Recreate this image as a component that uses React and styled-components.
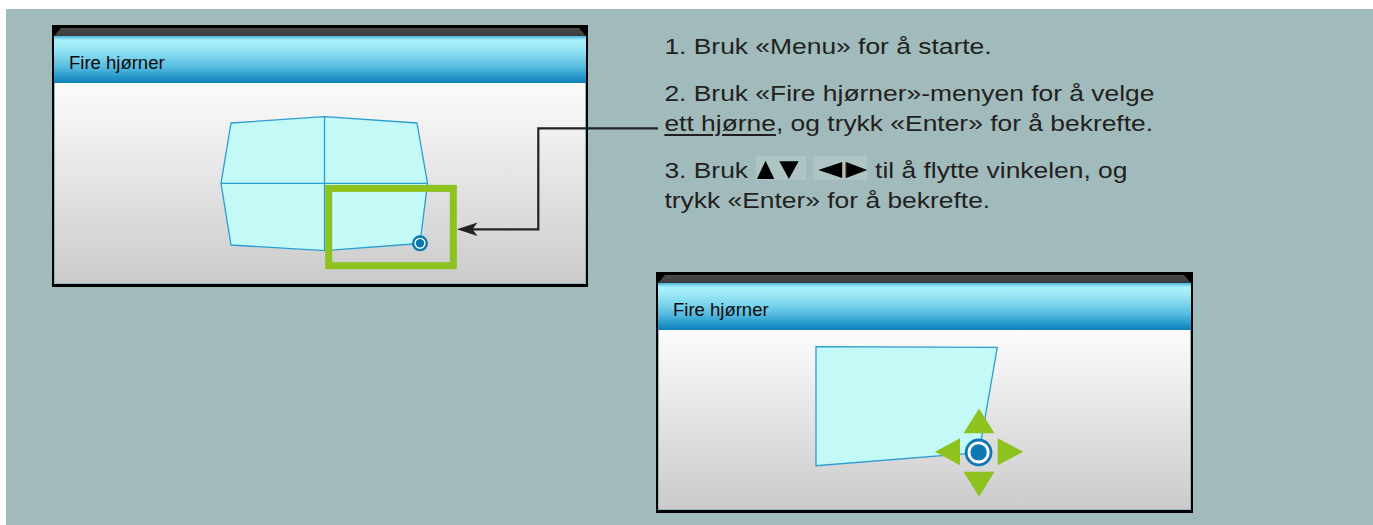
import React from 'react';
import styled, { createGlobalStyle } from 'styled-components';

const GlobalStyle = createGlobalStyle`
  html, body { margin: 0; padding: 0; background: #ffffff; }
  body { font-family: "Liberation Sans", Arial, sans-serif; }
`;

const Page = styled.div`
  width: 1373px;
  height: 525px;
  padding: 9px 0 0 6px;
  box-sizing: border-box;
  background: #ffffff;
  overflow: hidden;
`;

const Canvas = styled.div`
  position: relative;
  height: 516px;
  background: #a1bbbc;
  display: flex;
  align-items: flex-start;
  padding: 16px 0 0 46px;
  box-sizing: border-box;
`;

const RightColumn = styled.div`
  margin-left: 68px;
  display: flex;
  flex-direction: column;
  align-items: flex-start;
`;

const Steps = styled.div`
  margin-top: 7px;
  padding-left: 7px;
  width: 430px;
  transform: scaleX(1.2);
  transform-origin: 0 0;
  color: #231f20;
  font-size: 22px;
  line-height: 30px;
  white-space: nowrap;
  display: flex;
  flex-direction: column;
  gap: 17px;
`;

const Step = styled.p`
  margin: 0;
`;

const Underlined = styled.span`
  text-decoration: underline;
  text-decoration-thickness: 1.5px;
  text-underline-offset: 3px;
`;

const KeyGroup = styled.span`
  display: inline-block;
  width: ${(p) => p.$w}px;
  height: 24px;
  background: #afc4c4;
  vertical-align: -2px;
`;

const KeySvg = styled.svg`
  display: block;
  width: 100%;
  height: 100%;
`;

const PanelFrame = styled.div`
  width: ${(p) => p.$w}px;
  height: ${(p) => p.$h}px;
  margin-top: ${(p) => p.$top || 0}px;
  background: #000000;
  padding: 3px 2px;
  box-sizing: border-box;
  display: flex;
  flex-direction: column;
  flex: none;
`;

const TitleBevel = styled.div`
  height: 8px;
  flex: none;
  background: linear-gradient(#4a4a4a, #3c3c3c);
  clip-path: polygon(7px 0, calc(100% - 7px) 0, 100% 100%, 0 100%);
`;

const TitleBar = styled.div`
  height: 47px;
  flex: none;
  box-sizing: border-box;
  padding: 16px 0 0 15px;
  background: linear-gradient(
    180deg,
    #45b4da 0px,
    #a9f1fa 4px,
    #a3ecf8 9px,
    #80d7ee 20px,
    #52b9df 32px,
    #2396c8 41px,
    #0f80b9 47px
  );
  color: #0a0a0a;
  font-size: 18.5px;
  line-height: 21px;
`;

const PanelBody = styled.div`
  flex: 1;
  min-height: 0;
  border: 1px solid #8ab6c8;
  border-top: none;
  background: linear-gradient(180deg, #fcfcfc, #cbcbcb);
`;

const Drawing = styled.svg`
  display: block;
  width: 100%;
  height: 100%;
`;

const Overlay = styled.svg`
  position: absolute;
  left: 0;
  top: 0;
  width: 100%;
  height: 100%;
  pointer-events: none;
`;

const CYAN = '#c3faf8';
const EDGE = '#2b9dcf';
const GREEN = '#8dc21f';
const DOT = '#0b78b2';

function Panel({ w, h, top, viewBox, children }) {
  return (
    <PanelFrame $w={w} $h={h} $top={top}>
      <TitleBevel />
      <TitleBar>Fire hjørner</TitleBar>
      <PanelBody>
        <Drawing viewBox={viewBox} preserveAspectRatio="none">
          {children}
        </Drawing>
      </PanelBody>
    </PanelFrame>
  );
}

function Target({ cx, cy, r, ring, inner }) {
  return (
    <g>
      <circle cx={cx} cy={cy} r={r} fill="#ffffff" stroke={DOT} strokeWidth={ring} />
      <circle cx={cx} cy={cy} r={inner} fill={DOT} />
    </g>
  );
}

function BarrelScreen() {
  return (
    <g>
      <polygon
        points="231,123 324.5,116.7 417,123 427.5,183.3 420,243.5 324.5,250.7 231,245 221,183.3"
        fill={CYAN}
        stroke={EDGE}
        strokeWidth="1.3"
        strokeLinejoin="round"
      />
      <line x1="324.5" y1="116.7" x2="324.5" y2="250.7" stroke={EDGE} strokeWidth="1.3" />
      <line x1="221" y1="183.3" x2="427.5" y2="183.3" stroke={EDGE} strokeWidth="1.3" />
      <rect x="328.7" y="188.4" width="124.6" height="77.3" fill="none" stroke={GREEN} strokeWidth="7" />
      <Target cx={420} cy={243.3} r={6.8} ring={2.4} inner={4.2} />
    </g>
  );
}

function KeystoneScreen() {
  return (
    <g>
      <path
        d="M816,346.7 L997.3,347.3 L979,452.7 L816,465.7 Z"
        fill={CYAN}
        stroke={EDGE}
        strokeWidth="1.3"
      />
      <polygon points="979,408.5 963.5,433.3 994.5,433.3" fill={GREEN} />
      <polygon points="963.5,471.7 994.5,471.7 979,496.7" fill={GREEN} />
      <polygon points="935,451.8 960,438.3 960,465.3" fill={GREEN} />
      <polygon points="997.7,438.3 997.7,465.3 1023.3,451.8" fill={GREEN} />
      <Target cx={978.6} cy={452.4} r={12.4} ring={2.8} inner={8.2} />
    </g>
  );
}

export default function App() {
  return (
    <>
      <GlobalStyle />
      <Page>
        <Canvas>
          <Panel w={536} h={262} viewBox="55 83 530 200">
            <BarrelScreen />
          </Panel>
          <RightColumn>
            <Steps>
              <Step>1. Bruk «Menu» for å starte.</Step>
              <Step>
                2. Bruk «Fire hjørner»-menyen for å velge
                <br />
                <Underlined>ett hjørne</Underlined>, og trykk «Enter» for å bekrefte.
              </Step>
              <Step>
                3. Bruk{' '}
                <KeyGroup $w={41.7}>
                  <KeySvg viewBox="0 0 50 24" preserveAspectRatio="none">
                    <polygon points="1.3,23 10,4.7 18.7,23" fill="#000" />
                    <polygon points="23.7,5.3 43,5.3 33.3,23" fill="#000" />
                  </KeySvg>
                </KeyGroup>{' '}
                <KeyGroup $w={45.8}>
                  <KeySvg viewBox="0 0 55 24" preserveAspectRatio="none">
                    <polygon points="5,14 29,6 29,22" fill="#000" />
                    <line x1="32.3" y1="6" x2="32.3" y2="22" stroke="#a0623a" strokeWidth="1" />
                    <polygon points="33,6 33,22 54,14" fill="#000" />
                  </KeySvg>
                </KeyGroup>{' '}
                til å flytte vinkelen, og
                <br />
                trykk «Enter» for å bekrefte.
              </Step>
            </Steps>
            <Panel w={537} h={241} top={56} viewBox="659 330 531 179">
              <KeystoneScreen />
            </Panel>
          </RightColumn>
          <Overlay viewBox="6 9 1367 516" preserveAspectRatio="none">
            <polyline
              points="658,128.3 538.3,128.3 538.3,229.3 472,229.3"
              fill="none"
              stroke="#222222"
              strokeWidth="2.2"
            />
            <path d="M457,229.3 L477.5,222.5 L472.5,229.3 L477.5,236.1 Z" fill="#222222" />
          </Overlay>
        </Canvas>
      </Page>
    </>
  );
}
